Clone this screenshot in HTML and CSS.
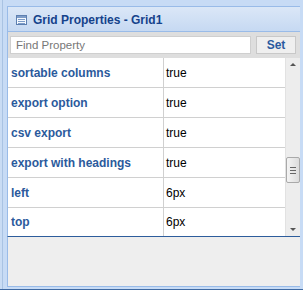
FILE: index.html
```html
<!DOCTYPE html>
<html>
<head>
<meta charset="utf-8">
<link rel="stylesheet" href="styles.css">
</head>
<body>
<div class="win">
  <div class="header">
    <svg class="hicon" width="11" height="10" viewBox="0 0 11 10">
      <rect x="0.5" y="0.5" width="10" height="9" fill="#f4f8fd" stroke="#5d7fb0"/>
      <rect x="1" y="1" width="9" height="2" fill="#7d9cc8"/>
      <line x1="2" y1="4.5" x2="9" y2="4.5" stroke="#7d9cc8"/>
      <line x1="2" y1="6.5" x2="9" y2="6.5" stroke="#7d9cc8"/>
      <line x1="2" y1="8.5" x2="9" y2="8.5" stroke="#7d9cc8"/>
    </svg>
    <span class="title">Grid Properties - Grid1</span>
  </div>
  <div class="toolbar">
    <div class="find">Find Property</div>
    <div class="setbtn">Set</div>
  </div>
  <div class="grid">
    <div class="rows">
      <div class="row"><div class="name">sortable columns</div><div class="val">true</div></div>
      <div class="row"><div class="name">export option</div><div class="val">true</div></div>
      <div class="row"><div class="name">csv export</div><div class="val">true</div></div>
      <div class="row"><div class="name">export with headings</div><div class="val">true</div></div>
      <div class="row"><div class="name">left</div><div class="val">6px</div></div>
      <div class="row last"><div class="name">top</div><div class="val">6px</div></div>
    </div>
    <div class="sbar">
      <div class="arrow up"></div>
      <div class="track">
        <div class="thumb"><div class="grip"></div></div>
      </div>
      <div class="arrow down"></div>
    </div>
  </div>
  <div class="footer"></div>
</div>
</body>
</html>
```
FILE: styles.css
```css
html, body {
  margin: 0;
  padding: 0;
  font-family: "Liberation Sans", Arial, sans-serif;
  background: #c7dbf5;
}
.win {
  box-sizing: border-box;
  width: 303px;
  height: 290px;
  padding: 6px 3px 2px 7px;
  display: flex;
  flex-direction: column;
  background: #c7dbf5;
  border-bottom: 1px solid #3f6aa3;
  box-shadow: inset 2px 0 0 #c9dcf4, inset 3px 0 0 #a9c3e3;
}
.header {
  flex: none;
  height: 26px;
  box-sizing: border-box;
  border: 1px solid #99bbe8;
  border-right: none;
  background: linear-gradient(#dbe7f7, #c6d9f2);
  display: flex;
  align-items: center;
  padding-left: 8px;
  gap: 6px;
}
.hicon { margin-top: 2px; }
.title {
  font-weight: bold;
  font-size: 12px;
  color: #15428b;
  margin-top: 1px;
}
.toolbar {
  flex: none;
  height: 26px;
  box-sizing: border-box;
  background: #dedede;
  border-left: 1px solid #99bbe8;
  display: flex;
  align-items: center;
  padding: 0 4px 0 2px;
  gap: 5px;
}
.find {
  flex: 1;
  height: 18px;
  box-sizing: border-box;
  background: #fff;
  border: 1px solid #cfcfcf;
  font-size: 11.5px;
  color: #777;
  padding-left: 5px;
  line-height: 16px;
}
.setbtn {
  width: 40px;
  height: 18px;
  box-sizing: border-box;
  background: #efefef;
  border: 1px solid #c8c8c8;
  font-size: 12px;
  font-weight: bold;
  color: #2a5aa0;
  text-align: center;
  line-height: 16px;
}
.grid {
  flex: none;
  height: 179px;
  box-sizing: border-box;
  display: flex;
  background: #fff;
  border-left: 1px solid #99bbe8;
  border-bottom: 1px solid #2d5d9c;
}
.rows {
  flex: 1;
  display: flex;
  flex-direction: column;
}
.row {
  flex: none;
  height: 30px;
  box-sizing: border-box;
  display: flex;
  border-bottom: 1px solid #d0d0d0;
  font-size: 12px;
  align-items: center;
}
.row.last { border-bottom: none; height: 28px; }
.name {
  width: 156px;
  box-sizing: border-box;
  height: 100%;
  display: flex;
  align-items: center;
  padding-left: 3px;
  font-weight: bold;
  color: #2b5a9c;
  border-right: 1px solid #d0d0d0;
}
.val {
  flex: 1;
  padding-left: 2px;
  color: #000;
}
.sbar {
  width: 14px;
  display: flex;
  flex-direction: column;
  background: #ededed;
  border-left: 1px solid #e2e2e2;
}
.arrow {
  flex: none;
  height: 14px;
  position: relative;
}
.arrow.up::after, .arrow.down::after {
  content: "";
  position: absolute;
  left: 4px;
  width: 0; height: 0;
  border-left: 3px solid transparent;
  border-right: 3px solid transparent;
}
.arrow.up::after { top: 5px; border-bottom: 3px solid #555; }
.arrow.down::after { top: 6px; border-top: 3px solid #555; }
.track {
  flex: 1;
  display: flex;
  flex-direction: column;
  justify-content: flex-end;
  padding-bottom: 39px;
}
.thumb {
  height: 26px;
  box-sizing: border-box;
  border: 1px solid #a9a9a9;
  border-radius: 2px;
  background: linear-gradient(to right, #f4f4f4, #dcdcdc);
  display: flex;
  align-items: center;
  justify-content: center;
}
.grip {
  width: 6px;
  height: 5px;
  border-top: 1px solid #666;
  border-bottom: 1px solid #666;
  position: relative;
}
.grip::after {
  content: "";
  position: absolute;
  left: 0; right: 0; top: 2px;
  border-top: 1px solid #666;
}
.footer {
  flex: none;
  height: 50px;
  box-sizing: border-box;
  background: #eeeeee;
  border-left: 1px solid #99bbe8;
  border-bottom: 1px solid #99bbe8;
}
```
